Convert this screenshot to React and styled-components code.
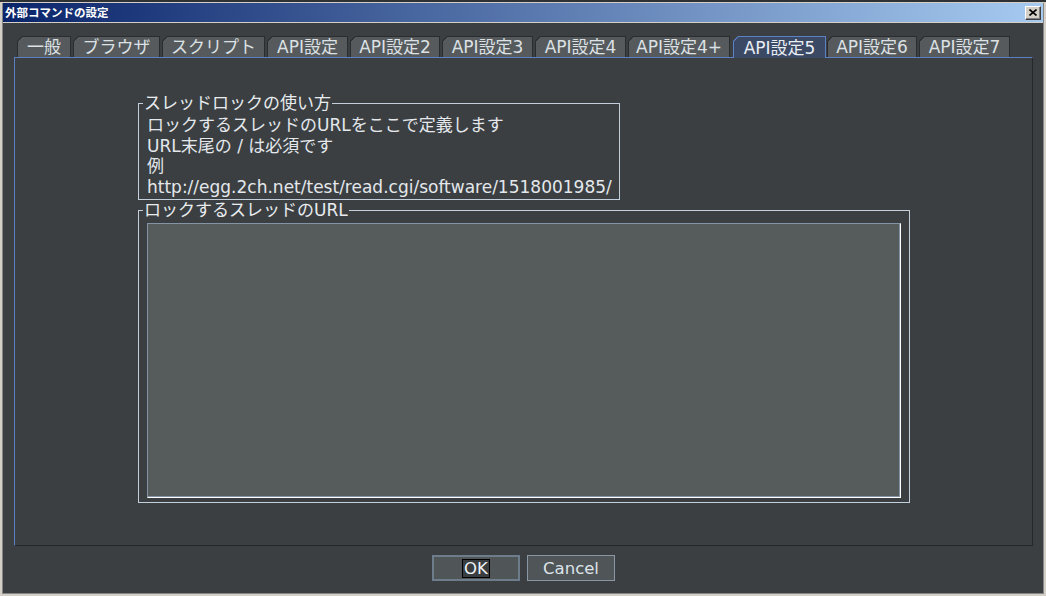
import styled, { createGlobalStyle } from "styled-components";

const GlobalStyle = createGlobalStyle`
  html, body {
    margin: 0;
    padding: 0;
    background: #2d3032;
  }
  body {
    font-family: "DejaVu Sans", "Noto Sans CJK JP", sans-serif;
  }
`;

const Screen = styled.div`
  width: 1046px;
  height: 596px;
  display: flex;
  flex-direction: column;
  overflow: hidden;
`;

const DesktopStrip = styled.div`
  flex: none;
  height: 2px;
  background: #2f3234;
`;

const Window = styled.div`
  flex: 1;
  display: flex;
  flex-direction: column;
  border: 2px solid #d4d0c8;
  border-top-width: 1px;
`;

const Frame = styled.div`
  flex: 1;
  display: flex;
  flex-direction: column;
  border: 1px solid #868686;
  border-top: none;
`;

const TitleBar = styled.div`
  flex: none;
  height: 19px;
  display: flex;
  align-items: center;
  justify-content: space-between;
  padding: 0 2px;
  background: linear-gradient(to right, #0a246a, #a6caf0);
  border-bottom: 1px solid #d4d0c8;
`;

const TitleText = styled.span`
  font-family: "Noto Sans CJK JP", sans-serif;
  font-size: 11.5px;
  font-weight: bold;
  color: #ffffff;
  line-height: 19px;
`;

const CloseButton = styled.div`
  width: 16px;
  height: 14px;
  box-sizing: border-box;
  display: flex;
  align-items: center;
  justify-content: center;
  background: #d4d0c8;
  border: 1px solid;
  border-color: #ffffff #404040 #404040 #ffffff;
  box-shadow: inset -1px -1px 0 #808080;
`;

const Body = styled.div`
  flex: 1;
  display: flex;
  flex-direction: column;
  background: #3b3f42;
  padding: 13px 10px 12px 11px;
`;

const TabRow = styled.div`
  display: flex;
  align-items: flex-end;
  gap: 2px;
  height: 21px;
  margin-left: 3px;
`;

const Tab = styled.div`
  position: relative;
  z-index: ${({ $active }) => ($active ? 1 : 0)};
  box-sizing: border-box;
  width: ${({ $w }) => $w}px;
  height: ${({ $active }) => ($active ? 22 : 21)}px;
  margin: ${({ $active }) => ($active ? "0 -1px -1px 1px" : "0")};
  display: flex;
  align-items: center;
  justify-content: center;
  font-size: 17px;
  line-height: 20px;
  white-space: nowrap;
  color: ${({ $active }) => ($active ? "#e9eef4" : "#dce1e5")};
  border: 1px solid ${({ $active }) => ($active ? "#5b80c4" : "#2a2d30")};
  border-bottom: none;
  background-origin: border-box;
  background-image: linear-gradient(
    135deg,
    ${({ $active }) => ($active ? "#5b80c4" : "#2a2d30")} 0,
    ${({ $active }) => ($active ? "#5b80c4" : "#2a2d30")} 4.6px,
    ${({ $active }) => ($active ? "#3c4964" : "#565a5c")} 4.6px
  );
  clip-path: polygon(5px 0, 100% 0, 100% 100%, 0 100%, 0 5px);
`;

const Panel = styled.div`
  box-sizing: border-box;
  height: 489px;
  display: flex;
  flex-direction: column;
  align-items: flex-start;
  gap: 2px;
  padding: 37px 0 0 123px;
  border: 1px solid;
  border-color: #5b80c4 #25282a #25282a #5b80c4;
`;

const GroupBox = styled.fieldset`
  box-sizing: border-box;
  width: ${({ $w }) => $w}px;
  margin: 0;
  padding: ${({ $pad }) => $pad};
  min-inline-size: 0;
  border: 1px solid #c3d0dc;
`;

const Legend = styled.legend`
  margin-left: -4px;
  padding: 0 1px;
  font-size: 17px;
  line-height: 16px;
  color: #e8ecef;
`;

const InfoLine = styled.div`
  font-size: 17px;
  line-height: 20.6px;
  color: #e4e8ec;
  white-space: nowrap;
`;

const UrlBox = styled.textarea`
  display: block;
  box-sizing: border-box;
  width: 100%;
  height: 275px;
  margin: 0;
  padding: 2px 4px;
  resize: none;
  outline: none;
  background: #565b5b;
  color: #e4e8ec;
  font-family: "DejaVu Sans", "Noto Sans CJK JP", sans-serif;
  font-size: 17px;
  border: 1px solid;
  border-color: #8494a4 #ffffff #ffffff #8494a4;
  box-shadow: inset -1px -1px 0 #8494a4;
`;

const ButtonRow = styled.div`
  display: flex;
  justify-content: center;
  gap: 7px;
  margin-top: 9px;
`;

const Button = styled.div`
  box-sizing: border-box;
  width: 88px;
  height: 26px;
  display: flex;
  align-items: center;
  justify-content: center;
  background: #505558;
  border: ${({ $default }) => ($default ? "2px solid #6d7d8c" : "1px solid #8a98a6")};
  font-size: 16.5px;
  color: #dde4ea;
`;

const FocusLabel = styled.span`
  display: inline-block;
  padding: 0 1px;
  line-height: 17px;
  border: 1px solid #000000;
  background: #3a3e40;
  color: #eef2f5;
`;

const tabs = [
  { label: "一般", w: 54 },
  { label: "ブラウザ", w: 87 },
  { label: "スクリプト", w: 103 },
  { label: "API設定", w: 81 },
  { label: "API設定2", w: 90 },
  { label: "API設定3", w: 91 },
  { label: "API設定4", w: 91 },
  { label: "API設定4+", w: 102 },
  { label: "API設定5", w: 93, active: true },
  { label: "API設定6", w: 90 },
  { label: "API設定7", w: 91 },
];

const info = [
  "ロックするスレッドのURLをここで定義します",
  "URL末尾の / は必須です",
  "例",
  "http://egg.2ch.net/test/read.cgi/software/1518001985/",
];

export default function App() {
  return (
    <Screen>
      <GlobalStyle />
      <DesktopStrip />
      <Window>
        <Frame>
          <TitleBar>
            <TitleText>外部コマンドの設定</TitleText>
            <CloseButton>
              <svg width="8" height="7" viewBox="0 0 8 7">
                <path d="M0.5 0.5 L7.5 6.5 M7.5 0.5 L0.5 6.5" stroke="#000" strokeWidth="1.6" />
              </svg>
            </CloseButton>
          </TitleBar>
          <Body>
            <TabRow>
              {tabs.map((t) => (
                <Tab key={t.label} $w={t.w} $active={t.active}>
                  {t.label}
                </Tab>
              ))}
            </TabRow>
            <Panel>
              <GroupBox $w={482} $pad="4px 8px 2px 8px">
                <Legend>スレッドロックの使い方</Legend>
                {info.map((line) => (
                  <InfoLine key={line}>{line}</InfoLine>
                ))}
              </GroupBox>
              <GroupBox $w={772} $pad="5px 8px 4px 8px">
                <Legend>ロックするスレッドのURL</Legend>
                <UrlBox readOnly />
              </GroupBox>
            </Panel>
            <ButtonRow>
              <Button $default>
                <FocusLabel>OK</FocusLabel>
              </Button>
              <Button>Cancel</Button>
            </ButtonRow>
          </Body>
        </Frame>
      </Window>
    </Screen>
  );
}
